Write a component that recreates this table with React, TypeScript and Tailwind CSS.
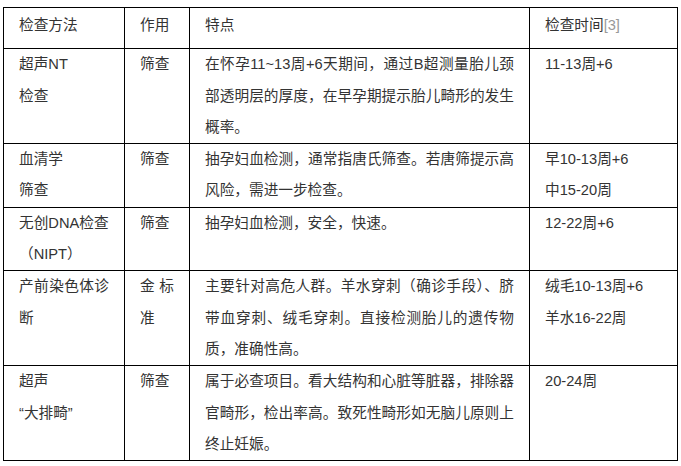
const font = '[font-family:"Liberation_Sans","Noto_Sans_CJK_SC",sans-serif]';

type Row = {
  method: string[];
  use: string;
  feature: string;
  time: string[];
};

const rows: Row[] = [
  {
    method: ['超声NT', '检查'],
    use: '筛查',
    feature: '在怀孕11~13周+6天期间，通过B超测量胎儿颈部透明层的厚度，在早孕期提示胎儿畸形的发生概率。',
    time: ['11-13周+6'],
  },
  {
    method: ['血清学', '筛查'],
    use: '筛查',
    feature: '抽孕妇血检测，通常指唐氏筛查。若唐筛提示高风险，需进一步检查。',
    time: ['早10-13周+6', '中15-20周'],
  },
  {
    method: ['无创DNA检查', '（NIPT）'],
    use: '筛查',
    feature: '抽孕妇血检测，安全，快速。',
    time: ['12-22周+6'],
  },
  {
    method: ['产前染色体诊断'],
    use: '金标准',
    feature: '主要针对高危人群。羊水穿刺（确诊手段）、脐带血穿刺、绒毛穿刺。直接检测胎儿的遗传物质，准确性高。',
    time: ['绒毛10-13周+6', '羊水16-22周'],
  },
  {
    method: ['超声', '“大排畸”'],
    use: '筛查',
    feature: '属于必查项目。看大结构和心脏等脏器，排除器官畸形，检出率高。致死性畸形如无脑儿原则上终止妊娠。',
    time: ['20-24周'],
  },
];

const cell = 'border border-black px-[15px] align-top text-justify';

export default function App() {
  return (
    <div className={`min-h-[466px] w-[681px] bg-white pl-[3px] pt-[7px] text-[14.67px] leading-[31.3px] text-[#333] ${font}`}>
      <table className="table-fixed border-collapse">
        <colgroup>
          <col className="w-[121px]" />
          <col className="w-[65px]" />
          <col className="w-[340px]" />
          <col className="w-[148px]" />
        </colgroup>
        <thead>
          <tr>
            <th className={`${cell} pt-[2px] pb-[7px] text-left font-normal`}>检查方法</th>
            <th className={`${cell} pt-[2px] pb-[7px] text-left font-normal`}>作用</th>
            <th className={`${cell} pt-[2px] pb-[7px] text-left font-normal`}>特点</th>
            <th className={`${cell} pt-[2px] pb-[7px] text-left font-normal`}>
              检查时间<span className="text-[#999]">[3]</span>
            </th>
          </tr>
        </thead>
        <tbody>
          {rows.map((r) => (
            <tr key={r.method.join('')}>
              <td className={cell}>
                {r.method.map((m) => (
                  <p key={m}>{m}</p>
                ))}
              </td>
              <td className={cell}>{r.use}</td>
              <td className={cell}>{r.feature}</td>
              <td className={cell}>
                {r.time.map((t) => (
                  <p key={t}>{t}</p>
                ))}
              </td>
            </tr>
          ))}
        </tbody>
      </table>
    </div>
  );
}
